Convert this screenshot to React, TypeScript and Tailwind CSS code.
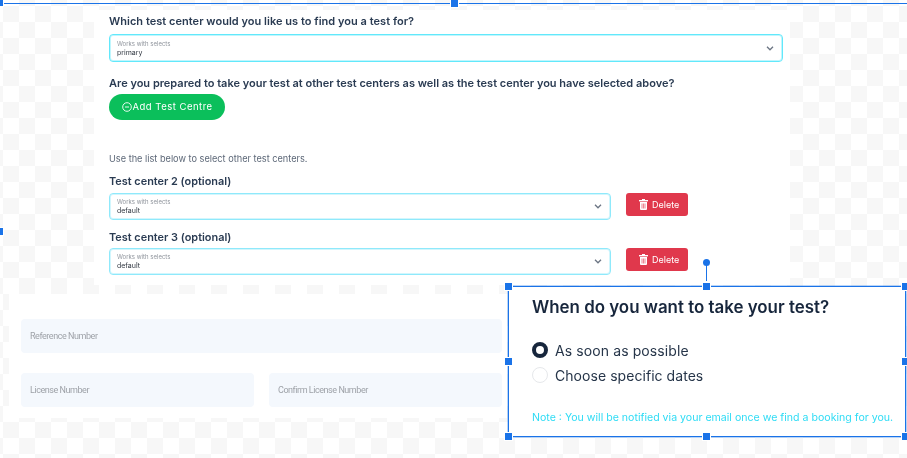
import React from "react";

const font = { fontFamily: "Inter, 'Liberation Sans', sans-serif" };

function Chevron() {
  return (
    <svg width="8" height="5" viewBox="0 0 8 5" fill="none" stroke="#6b7583" strokeWidth="1.3" className="shrink-0">
      <path d="M1 .8l3 3 3-3" />
    </svg>
  );
}

function TrashIcon() {
  return (
    <svg width="9" height="11" viewBox="0 0 9 11" fill="#fff" className="shrink-0">
      <rect x="0" y="1" width="9" height="1.4" />
      <rect x="3" y="0" width="3" height="1" />
      <path d="M1 3h7v7a1 1 0 0 1-1 1H2a1 1 0 0 1-1-1z" />
      <path d="M3 4.5v5M4.5 4.5v5M6 4.5v5" stroke="#e0384c" strokeWidth=".6" />
    </svg>
  );
}

function SelectBox({ value, size, border }: { value: string; size: string; border: string }) {
  return (
    <div className={`flex items-center justify-between rounded border pl-[7px] pr-[8px] ring-1 ring-inset ${size} ${border}`}>
      <div className="flex flex-col">
        <span className="text-[6px] leading-[8px] text-[#8f949c]">Works with selects</span>
        <span className="text-[7px] leading-[9px] text-[#2f3640]">{value}</span>
      </div>
      <Chevron />
    </div>
  );
}

function Optional({ n, className, gap }: { n: number; className: string; gap: string }) {
  return (
    <div className={`flex flex-col ${gap} ${className}`}>
      <div className="h-[15px] text-[10.9px] font-semibold leading-[15px] text-[#2a3b52]">Test center {n} (optional)</div>
      <div className="flex items-start">
        <SelectBox value="default" size="h-[27px] w-[502px]" border="border-[#8fe9fb] ring-[#8fe9fb]/40" />
        <button className="ml-[15px] flex h-[23px] w-[62px] items-center justify-start gap-[4px] rounded-[3px] bg-[#e0384c] pl-[13px] text-[9px] text-white">
          <TrashIcon />
          Delete
        </button>
      </div>
    </div>
  );
}

function Handle({ x, y }: { x: number; y: number }) {
  return <div className="absolute h-[7px] w-[7px] bg-[#1a73e8] ring-1 ring-white" style={{ left: x, top: y }} />;
}

function Field({ label, className }: { label: string; className: string }) {
  return (
    <div
      className={`flex h-[34px] items-center rounded-sm bg-[#f4f8fd] pl-[9px] pt-[2px] text-[9px] tracking-[-0.45px] text-[#9ea2a8] ${className}`}
      style={{ fontFamily: "Roboto, sans-serif" }}
    >
      {label}
    </div>
  );
}

export default function App() {
  return (
    <div
      className="relative h-[458px] w-[907px] overflow-hidden bg-[repeating-conic-gradient(#ffffff_0_25%,#f7f7f7_0_50%)] bg-[length:32px_32px] bg-[position:3px_6px]"
      style={font}
    >
      {/* frame 1 */}
      <div className="absolute left-[94px] top-[10px] flex h-[275px] w-[696px] flex-col bg-white pl-[15px] blur-[0.45px]">
        <div className="mt-[4px] h-[15px] text-[11px] font-semibold leading-[15px] tracking-[0.03px] text-[#2a3b52]">Which test center would you like us to find you a test for?</div>
        <div className="mt-[5px]">
          <SelectBox value="primary" size="h-[28px] w-[674px]" border="border-[#62e8fb] ring-[#62e8fb]/40" />
        </div>
        <div className="mt-[14px] h-[15px] text-[11px] font-semibold leading-[15px] text-[#2a3b52]">Are you prepared to take your test at other test centers as well as the test center you have selected above?</div>
        <button className="mt-[3px] flex h-[26px] w-[116px] items-center justify-center rounded-full bg-[#0bbf5b] pl-[1px] text-[9.5px] tracking-[0.5px] text-white">
          <svg width="10" height="10" viewBox="0 0 10 10" fill="none" stroke="#fff" strokeWidth=".9" className="shrink-0">
            <circle cx="5" cy="5" r="4.3" />
            <path d="M3 5h4" />
          </svg>
          Add Test Centre
        </button>
        <div className="mt-[32px] h-[13px] text-[9.2px] leading-[13px] text-[#5d6878]">Use the list below to select other test centers.</div>
        <Optional n={2} className="mt-[9px]" gap="gap-[4px]" />
        <Optional n={3} className="mt-[10px]" gap="gap-[3px]" />
      </div>

      {/* frame 2 */}
      <div className="absolute left-[9px] top-[294px] flex h-[124px] w-[498px] flex-col gap-[20px] bg-white pl-[12px] pr-[5px] pt-[25px] blur-[0.45px]">
        <Field label="Reference Number" className="w-[481px]" />
        <div className="flex gap-[15px]">
          <Field label="License Number" className="w-[233px]" />
          <Field label="Confirm License Number" className="w-[233px]" />
        </div>
      </div>

      {/* frame 3 */}
      <div className="absolute left-[508px] top-[287px] flex h-[149px] w-[397px] flex-col bg-white pl-[24px] blur-[0.2px]">
        <div className="mt-[9px] h-[22px] text-[16.9px] font-semibold leading-[22px] text-[#17263c]">When do you want to take your test?</div>
        <div className="mt-[22px] flex h-[20px] items-center gap-[7px] text-[14px] tracking-[0.1px] text-[#263549]">
          <span className="h-[16px] w-[16px] rounded-full border-[4px] border-[#17263c] bg-white" />
          As soon as possible
        </div>
        <div className="mt-[5px] flex h-[20px] items-center gap-[7px] text-[14px] tracking-[0.05px] text-[#263549]">
          <span className="h-[16px] w-[16px] rounded-full border border-[#e6e8eb] bg-white" />
          Choose specific dates
        </div>
        <div className="mt-[26px] text-[10.6px] leading-[14px] text-[#2fdcf5]">Note : You will be notified via your email once we find a booking for you.</div>
      </div>

      {/* selection of frame 3 */}
      <div className="pointer-events-none absolute left-[508px] top-[286px] h-[151px] w-[398px] border border-[#1a73e8] ring-1 ring-[#1a73e8]/30" />
      <Handle x={505} y={283} />
      <Handle x={703} y={283} />
      <Handle x={902} y={283} />
      <Handle x={505} y={358} />
      <Handle x={902} y={358} />
      <Handle x={505} y={433} />
      <Handle x={703} y={433} />
      <Handle x={902} y={433} />
      <div className="absolute left-[706px] top-[262px] h-[19px] w-px bg-[#1a73e8]" />
      <div className="absolute left-[703px] top-[259px] h-[7px] w-[7px] rounded-full bg-[#1a73e8]" />

      {/* outer selection */}
      <div className="absolute left-0 top-[3px] h-px w-[907px] bg-[#1a73e8]" />
      <Handle x={-4} y={-1} />
      <Handle x={451} y={0} />
      <Handle x={-4} y={228} />
    </div>
  );
}
